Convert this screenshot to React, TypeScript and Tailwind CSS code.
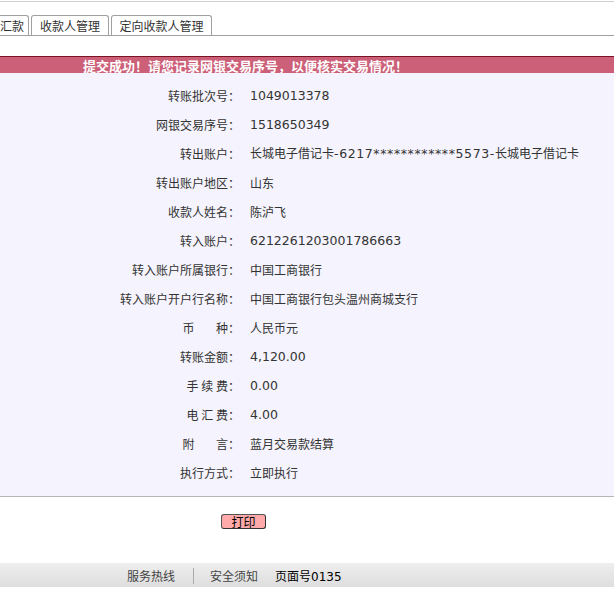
import React from "react";

const cjk = { fontFamily: '"Noto Sans CJK SC", sans-serif' };
const num = { fontFamily: '"DejaVu Sans", "Noto Sans CJK SC", sans-serif', fontSize: "12.5px" };

const N = ({ children }: { children: React.ReactNode }) => <span style={num}>{children}</span>;

const rows: [string, React.ReactNode][] = [
  ["转账批次号：", <N>1049013378</N>],
  ["网银交易序号：", <N>1518650349</N>],
  ["转出账户：", <>长城电子借记卡<span className="tracking-[0.6px]" style={num}>-6217************5573-</span>长城电子借记卡</>],
  ["转出账户地区：", "山东"],
  ["收款人姓名：", "陈泸飞"],
  ["转入账户：", <N>6212261203001786663</N>],
  ["转入账户所属银行：", "中国工商银行"],
  ["转入账户开户行名称：", "中国工商银行包头温州商城支行"],
  ["币\u00a0\u00a0\u00a0\u00a0\u00a0\u00a0\u00a0\u00a0种：", "人民币元"],
  ["转账金额：", <N>4,120.00</N>],
  ["手\u00a0续\u00a0费：", <N>0.00</N>],
  ["电\u00a0汇\u00a0费：", <N>4.00</N>],
  ["附\u00a0\u00a0\u00a0\u00a0\u00a0\u00a0\u00a0\u00a0言：", "蓝月交易款结算"],
  ["执行方式：", "立即执行"],
];

export default function App() {
  return (
    <div className="w-[614px] h-[590px] bg-white text-[12px] text-[#333] overflow-hidden relative" style={cjk}>
      <div className="h-[1px] mt-[1px] bg-[#cfcfcf]" />
      <div className="flex items-end h-[34px] border-b border-[#a0a0a0]">
        <div className="-ml-[14px] h-[20px] w-[43px] border border-b-0 border-[#a0a0a0] rounded-t-[3px] flex items-center justify-end pr-[4px] pt-[1px] leading-none">汇款</div>
        <div className="ml-[2px] h-[20px] w-[78px] border border-b-0 border-[#a0a0a0] rounded-t-[3px] flex items-center justify-center pt-[1px] leading-none">收款人管理</div>
        <div className="ml-[2px] h-[20px] w-[101px] border border-b-0 border-[#a0a0a0] rounded-t-[3px] flex items-center justify-center pt-[1px] leading-none">定向收款人管理</div>
      </div>
      <div className="mt-[20px] border-t border-[#7a1424] bg-[#cc6078] h-[17px] flex items-center pl-[83px] text-white font-bold text-[13px] leading-none">
        提交成功！请您记录网银交易序号，以便核实交易情况！
      </div>
      <div className="bg-[#f5f3fd] border-b border-[#b5b5b5] pt-[8px] h-[424px]">
        {rows.map(([l, v], i) => (
          <div key={i} className="flex h-[29px] items-center">
            <div className="w-[241px] text-right pr-[1px] whitespace-pre">{l}</div>
            <div className="pl-[9px] whitespace-nowrap">{v}</div>
          </div>
        ))}
      </div>
      <div className="flex mt-[17px]">
        <button className="ml-[221px] h-[15px] w-[45px] bg-[#ffaaaa] border border-[#555] border-r-[#333] border-b-[#333] rounded-[3px] text-[12px] text-black leading-none flex items-center justify-center">
          打印
        </button>
      </div>
      <div className="absolute left-0 right-0 top-[563px] h-[24px] pt-[2px] bg-gradient-to-b from-[#eeeeee] to-[#dedede] flex items-center text-[12px] text-[#444]">
        <span className="ml-[127px]">服务热线</span>
        <span className="ml-[18px] w-[1px] h-[16px] bg-[#aaa]" />
        <span className="ml-[16px]">安全须知</span>
        <span className="ml-[17px] text-black">页面号<span style={{ ...num, fontSize: "12px" }}>0135</span></span>
      </div>
    </div>
  );
}
